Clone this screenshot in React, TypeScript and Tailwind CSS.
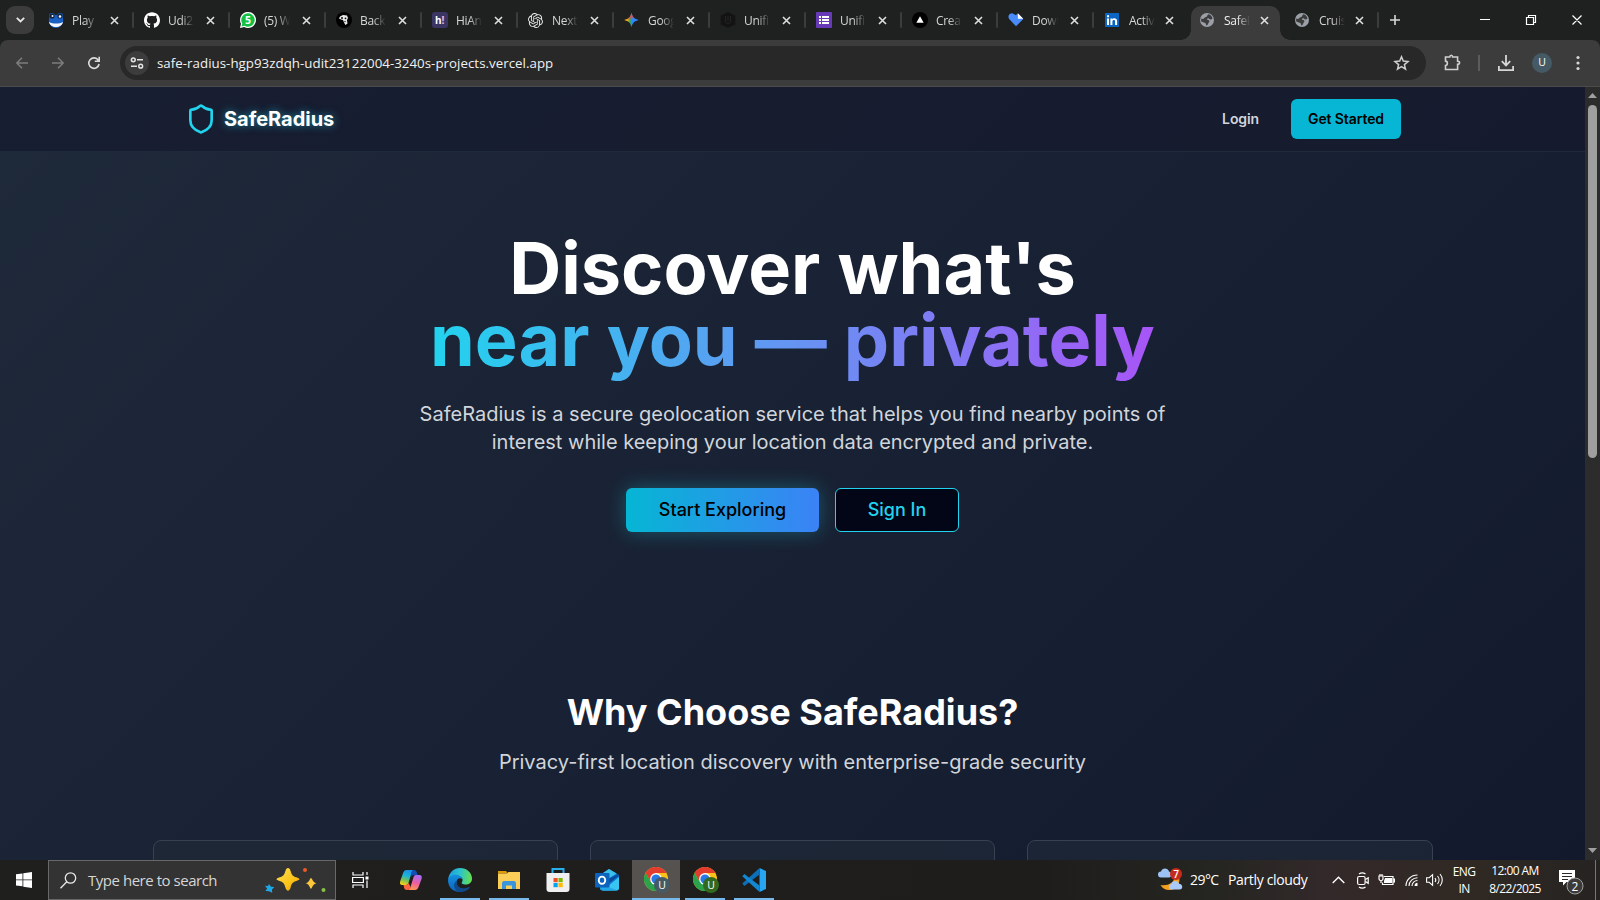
import { ReactNode } from 'react';
import { Shield } from 'lucide-react';
import { SiGithub, SiOpenai } from 'react-icons/si';

function Globe() {
  return (
    <svg width="16" height="16" viewBox="0 0 16 16">
      <circle cx="7" cy="8" r="7" fill="#9aa0a6" />
      <path d="M8.300 2.300c2.400.3 3.900 2.200 4.100 4.400-1 1-2.400 1-3.300.1-.9-.8-2-.5-2.100.4-.1.800 2.200.4 2.400 1.900.1 1-.6 1.300-1 2-.3.700-.7 2.300-1.700 2.300-.8 0-.5-1.700-1.200-2.200C4.700 10.600 3 10.400 1.300 9.600.9 8.500 1 7.500 1.300 6.600c1.300.5 2.500.4 3-.7.5-1 1.800-.5 2.600-1.400.5-.6.500-1.600 1.400-2.200z" fill="#3c3c3c" />
    </svg>
  );
}

function Frog() {
  return (
    <svg width="16" height="16" viewBox="0 0 16 16">
      <path d="M1 3c0-2.500 5-3 6 0h2c1-3 6-2.500 6 0v4c1 4-2 9-7 9s-8-5-7-9z" fill="#1a5fc4" />
      <circle cx="4" cy="4" r="2.600" fill="#10233f" /><circle cx="12" cy="4" r="2.600" fill="#10233f" />
      <circle cx="4.500" cy="4" r="1" fill="#fff" /><circle cx="12" cy="4.500" r="1.300" fill="#fff" />
      <path d="M1 10c4 2 10 2 14 0-.8 3.500-3.500 5-7 5s-6.200-1.500-7-5z" fill="#f3f6fb" />
    </svg>
  );
}

function WhatsApp() {
  return (
    <svg width="16" height="16" viewBox="0 0 16 16">
      <path d="M0 16l1-4.200A8 8 0 1 1 4.200 15z" fill="#fff" />
      <path d="M1.500 14.600l.8-3A6.700 6.700 0 1 1 4.600 13.800z" fill="#12c143" />
      <text x="8.100" y="12" textAnchor="middle" fontSize="10.500" fontWeight="700" fill="#fff" fontFamily="Open Sans, sans-serif">5</text>
    </svg>
  );
}

function Backpack() {
  return (
    <svg width="16" height="16" viewBox="0 0 16 16">
      <circle cx="8" cy="8" r="8" fill="#000" />
      <path d="M4 4.500l3-1.500 4 .5 1 2.500-1 2 .5 3.500-2 1.500-1.500-2.500-1-2.500-2-.5L3 6.500z" fill="#e8e8e8" />
      <circle cx="6" cy="6" r="1" fill="#111" /><circle cx="9.500" cy="6.300" r=".9" fill="#111" /><circle cx="9" cy="9.500" r=".7" fill="#222" />
    </svg>
  );
}

function HiAnime() {
  return (
    <svg width="16" height="16" viewBox="0 0 16 16">
      <rect width="16" height="16" rx="3" fill="#3b3564" />
      <text x="3" y="11.800" fontSize="10" fontWeight="700" fill="#fff" fontFamily="Open Sans, sans-serif">h<tspan fill="#ffb6dc">!</tspan></text>
    </svg>
  );
}

function Gemini() {
  return (
    <svg width="16" height="16" viewBox="0 0 16 16">
      <defs>
        <linearGradient id="gm" x1="0" y1=".5" x2="1" y2=".5"><stop offset="0" stopColor="#fbbc04" /><stop offset=".22" stopColor="#fbbc04" /><stop offset=".4" stopColor="#34a853" /><stop offset=".55" stopColor="#3186ff" /><stop offset="1" stopColor="#3186ff" /></linearGradient>
        <linearGradient id="gr" x1=".4" y1="0" x2=".55" y2=".5"><stop offset="0" stopColor="#f94543" /><stop offset=".55" stopColor="#f94543" stopOpacity=".8" /><stop offset=".9" stopColor="#f94543" stopOpacity="0" /></linearGradient>
      </defs>
      <path d="M7.500.8C8.400 5 10.500 7.100 14.800 8 10.500 8.900 8.400 11 7.500 15.200 6.600 11 4.500 8.900.2 8 4.500 7.100 6.600 5 7.500.8z" fill="url(#gm)" />
      <path d="M7.500.8C8.400 5 10.500 7.100 14.800 8 10.500 8.900 8.400 11 7.500 15.200 6.600 11 4.500 8.900.2 8 4.500 7.100 6.600 5 7.500.8z" fill="url(#gr)" />
    </svg>
  );
}

function Unified() {
  return (
    <svg width="16" height="16" viewBox="0 0 16 16">
      <path d="M8 0l7.200 3.500v9L8 16 .8 12.500v-9z" fill="#131313" />
      <path d="M5.500 4v6l2.500 2 2.500-2V4M8 4v5" stroke="#242424" fill="none" />
    </svg>
  );
}

function Forms() {
  return (
    <svg width="16" height="16" viewBox="0 0 16 16">
      <rect width="16" height="16" rx="1" fill="#673ab7" />
      <path d="M3 4h2v2H3zM6 4h7v2H6zM3 7h2v2H3zM6 7h7v2H6zM3 10h2v2H3zM6 10h7v2H6z" fill="#fff" />
    </svg>
  );
}

function Vercel() {
  return (
    <svg width="16" height="16" viewBox="0 0 16 16">
      <circle cx="8" cy="8" r="8" fill="#000" />
      <path d="M8 4.300l3.700 6.400H4.300z" fill="#fff" />
    </svg>
  );
}

function Heart() {
  return (
    <svg width="17" height="16" viewBox="0 0 17 16">
      <path d="M8.500 14.600L1.200 7C-1 3.500 2 .5 5 1l3.500 2L10 1l6.300 6z" fill="#4a8bfb" />
      <path d="M10.500.8l5.800 5.800h-5.800z" fill="#fff" />
    </svg>
  );
}

function LinkedIn() {
  return (
    <svg width="14" height="14" viewBox="0 0 14 14">
      <rect width="14" height="14" rx=".5" fill="#0a66c2" />
      <path d="M2 5.400h2V12H2zM2 2.200h2v2H2zM5.400 5.400h1.900v.9c1-1.700 4.800-1.500 4.800 1.700v4h-2V8.600c0-2.100-2.700-1.900-2.700 0V12h-2z" fill="#fff" />
    </svg>
  );
}

function Cross() {
  return (
    <svg width="9" height="9" viewBox="0 0 9 9" className="shrink-0">
      <path d="M1 1l7 7M8 1l-7 7" stroke="#dfdfdf" strokeWidth="1.600" fill="none" />
    </svg>
  );
}

const tabs: { name: string; icon: ReactNode }[] = [
  { name: 'Play ', icon: <Frog /> },
  { name: 'Udi2', icon: <SiGithub size={16} color="#fff" /> },
  { name: '(5) W', icon: <WhatsApp /> },
  { name: 'Back', icon: <Backpack /> },
  { name: 'HiAni', icon: <HiAnime /> },
  { name: 'Next.', icon: <SiOpenai size={15} color="#e8e8e8" /> },
  { name: 'Goog', icon: <Gemini /> },
  { name: 'Unifie', icon: <Unified /> },
  { name: 'Unifie', icon: <Forms /> },
  { name: 'Creat', icon: <Vercel /> },
  { name: 'Down', icon: <Heart /> },
];

function TabBody({ name, icon, bright }: { name: string; icon: ReactNode; bright?: boolean }) {
  return (
    <>
      <div className="flex w-4 shrink-0 items-center">{icon}</div>
      <div
        className={
          'ml-2 w-[26px] shrink-0 overflow-hidden whitespace-nowrap pt-[2px] text-[12px] leading-4 tracking-[-0.3px] [mask-image:linear-gradient(to_right,black_50%,transparent)] ' +
          (bright ? 'text-[#f0f0f0]' : 'text-[#d6d6d6]')
        }
      >
        {name}
      </div>
    </>
  );
}

function TabStrip() {
  return (
    <div className="flex h-10 shrink-0 items-center bg-[#1f2020] pl-[6px]">
      <div className="flex h-7 w-7 items-center justify-center rounded-[9px] bg-[#3c3c3c]">
        <svg width="9" height="6" viewBox="0 0 9 6"><path d="M.8.8l3.700 3.700L8.200.8" stroke="#e6e6e6" strokeWidth="1.800" fill="none" /></svg>
      </div>
      <div className="flex pl-[2px]">
        {tabs.map((t, i) => (
          <div key={i} className="flex h-10 w-24 items-center pl-3">
            <TabBody {...t} />
            <div className="ml-3 flex w-[9px] shrink-0"><Cross /></div>
            <div className="ml-[13px] h-4 w-[2px] shrink-0 rounded bg-[#3c3c3c]" />
          </div>
        ))}
      </div>
      <div className="flex h-10 w-[99px] items-center pl-[13px]">
        <TabBody name="Activ" icon={<LinkedIn />} />
        <div className="ml-[10px]"><Cross /></div>
      </div>
      <div className="relative flex h-[34px] w-[89px] items-center self-end rounded-t-[10px] bg-[#3c3c3c] pl-[9px]">
        <div className="absolute bottom-0 left-[-10px] h-[10px] w-[10px] bg-[radial-gradient(circle_at_0_0,transparent_9.500px,#3c3c3c_10px)]" />
        <div className="absolute bottom-0 right-[-10px] h-[10px] w-[10px] bg-[radial-gradient(circle_at_100%_0,transparent_9.500px,#3c3c3c_10px)]" />
        <div className="mb-[6px] flex items-center">
          <TabBody name="SafeR" icon={<Globe />} bright />
          <div className="ml-[10px]"><Cross /></div>
        </div>
      </div>
      <div className="flex h-10 w-[97px] items-center pl-[15px]">
        <TabBody name="Cruise" icon={<Globe />} />
        <div className="ml-[10px]"><Cross /></div>
      </div>
      <div className="h-4 w-[2px] rounded bg-[#3c3c3c]" />
      <svg width="12" height="12" viewBox="0 0 12 12" className="ml-[10px]"><path d="M6 1v10M1 6h10" stroke="#d8d8d8" strokeWidth="1.600" /></svg>
      <svg width="102" height="12" viewBox="0 0 102 12" className="ml-[79px]" fill="none" stroke="#fff">
        <path d="M0 5.500h10M46.500 3.500h7v7h-7zM48.500 3.500v-2h7v7h-2M92.500 1.500l9 9M101.500 1.500l-9 9" strokeWidth="1.200" />
      </svg>
    </div>
  );
}

function Toolbar() {
  return (
    <div className="flex h-[47px] shrink-0 bg-[#1f2020]">
      <div className="flex w-full items-center rounded-t-[8px] border-b border-[#4b4b4b] bg-[#3c3c3c] pl-4">
        <svg width="12" height="12" viewBox="0 0 12 12" fill="none" stroke="#7c7c7c" strokeWidth="1.500"><path d="M12 6H1M6 .8L.9 6 6 11.200" /></svg>
        <svg width="12" height="12" viewBox="0 0 12 12" fill="none" stroke="#7c7c7c" strokeWidth="1.500" className="ml-6"><path d="M0 6h11M6 .8L11.100 6 6 11.200" /></svg>
        <svg width="14" height="14" viewBox="0 0 14 14" fill="none" stroke="#dcdcdc" strokeWidth="1.600" className="ml-[23px]"><path d="M11.300 4.200A5.200 5.200 0 1 0 12.100 8M12.200.8v4.400H7.800" /></svg>
        <div className="ml-[19px] flex h-[34px] w-[1306px] items-center rounded-full bg-[#282828] pl-[5px] pr-4">
          <div className="flex h-6 w-6 items-center justify-center rounded-full bg-[#3c3c3c]">
            <svg width="14" height="12" viewBox="0 0 14 12" fill="none" stroke="#e3e3e3" strokeWidth="1.500"><circle cx="3.300" cy="2.800" r="1.900" /><path d="M7 2.800h6M1 9.200h6" /><circle cx="10.700" cy="9.200" r="1.900" /></svg>
          </div>
          <div className="ml-2 pt-px text-[13.300px] tracking-[0.030px] text-[#f1f1f1]">safe-radius-hgp93zdqh-udit23122004-3240s-projects.vercel.app</div>
          <svg width="17" height="16" viewBox="0 0 17 16" fill="none" stroke="#cfcfcf" strokeWidth="1.500" className="ml-auto"><path d="M8.500 1.800l1.800 4.300 4.700.4-3.600 3.100 1.100 4.600-4-2.500-4 2.500 1.100-4.600L2 6.500l4.700-.4z" /></svg>
        </div>
        <svg width="17" height="17" viewBox="0 0 17 17" fill="none" stroke="#cfcfcf" strokeWidth="1.600" className="-mt-px ml-[18px]"><path d="M1.500 3h4.300c0-2.300 2.800-2.300 2.800 0h5v4.200c2.600 0 2.600 3 0 3V15.500H1.500v-4c2.500-.2 2.500-4.200 0-4.400z" /></svg>
        <div className="ml-[17px] h-4 w-[2px] bg-[#5c5c5c]" />
        <svg width="16" height="16" viewBox="0 0 16 16" fill="none" stroke="#d6d6d6" strokeWidth="1.800" className="ml-[18px]"><path d="M8 0v10M3.800 6.200L8 10.400l4.200-4.200M.9 11v4.100h14.200V11" /></svg>
        <div className="ml-[18px] flex h-5 w-5 items-center justify-center rounded-full bg-[#455a64] text-[10.500px] font-medium text-white">U</div>
        <svg width="4" height="16" viewBox="0 0 4 16" fill="#d6d6d6" className="ml-[24px]"><circle cx="2" cy="2.500" r="1.600" /><circle cx="2" cy="8" r="1.600" /><circle cx="2" cy="13.500" r="1.600" /></svg>
      </div>
    </div>
  );
}

function Page() {
  return (
    <div className="flex min-h-0 flex-1 overflow-hidden">
      <div className="flex h-full w-[1585px] flex-col overflow-hidden bg-[linear-gradient(135deg,#1e293a_0%,#182133_55%,#12192d_100%)] font-[Inter,sans-serif]">
        <header className="flex h-[65px] shrink-0 justify-between border-b border-[#1e293b] bg-[#15182c]/65 pl-[185px] pr-[184px]">
          <div className="flex items-center gap-[7px]">
            <Shield size={32} color="#22d3ee" strokeWidth={2} />
            <span className="text-[20px] font-bold tracking-[-0.020px] text-white [text-shadow:0_0_8px_rgba(34,211,238,0.6)]">SafeRadius</span>
          </div>
          <div className="flex items-center gap-8">
            <span className="pb-px text-[14px] font-semibold tracking-[-0.1px] text-[#d1d5db]">Login</span>
            <button className="h-10 w-[110px] rounded-md bg-[#06b6d4] pb-px text-[14px] font-semibold tracking-[-0.1px] text-black">Get Started</button>
          </div>
        </header>
        <section className="flex flex-col items-center pt-[80px] text-center">
          <h1 className="text-[72px] font-bold leading-[72px] text-white">
            <span className="block">Discover what's</span>
            <span className="-mb-3 block bg-[linear-gradient(to_right,#22d3ee,#a855f7)] bg-clip-text pb-3 text-transparent">near you — privately</span>
          </h1>
          <p className="mt-6 w-[768px] text-[20px] leading-7 text-[#d1d5db]">
            SafeRadius is a secure geolocation service that helps you find nearby points of interest while keeping your location data encrypted and private.
          </p>
          <div className="mt-8 flex gap-4">
            <button className="h-11 w-[193px] rounded-md bg-[linear-gradient(to_right,#06b6d4,#3b82f6)] pb-px text-[18px] font-[550] text-black shadow-[0_0_20px_rgba(34,211,238,0.3)]">Start Exploring</button>
            <button className="h-11 w-[124px] rounded-md border border-[#22d3ee] bg-[#020617] pb-px text-[18px] font-[550] text-[#22d3ee]">Sign In</button>
          </div>
        </section>
        <section className="flex flex-col items-center pt-[160px] text-center">
          <h2 className="text-[36px] font-bold leading-10 text-white">Why Choose SafeRadius?</h2>
          <p className="mt-4 text-[20px] leading-7 text-[#d1d5db]">Privacy-first location discovery with enterprise-grade security</p>
          <div className="mt-16 grid w-[1280px] grid-cols-3 gap-8">
            <div className="h-40 rounded-lg border border-[#374151] bg-[#1f2937]/70" />
            <div className="h-40 rounded-lg border border-[#374151] bg-[#1f2937]/70" />
            <div className="h-40 rounded-lg border border-[#374151] bg-[#1f2937]/70" />
          </div>
        </section>
      </div>
      <div className="flex w-[15px] flex-col items-center bg-[#2c2c2c] pb-[7px] pt-[6px]">
        <svg width="9" height="5" viewBox="0 0 9 5" fill="#a0a0a0"><path d="M4.500 0L9 5H0z" /></svg>
        <div className="mt-[7px] h-[353px] w-[9px] rounded-full bg-[#9f9f9f]" />
        <svg width="9" height="5" viewBox="0 0 9 5" fill="#a0a0a0" className="mt-auto"><path d="M4.500 5L9 0H0z" /></svg>
      </div>
    </div>
  );
}

function Copilot() {
  return (
    <svg width="24" height="22" viewBox="0 0 24 22">
      <defs>
        <linearGradient id="ca" x1=".6" y1="0" x2=".3" y2="1"><stop offset="0" stopColor="#1b8ee8" /><stop offset=".4" stopColor="#1bb5d8" /><stop offset=".7" stopColor="#7cc152" /><stop offset="1" stopColor="#f5cf1c" /></linearGradient>
        <linearGradient id="cb" x1=".6" y1="0" x2=".3" y2="1"><stop offset="0" stopColor="#a86cf5" /><stop offset=".5" stopColor="#ee5fa0" /><stop offset="1" stopColor="#fd9a4e" /></linearGradient>
      </defs>
      <path d="M15 1H7.500C5.500 1 4.600 2.500 4 4.300L1.300 12C.4 15 1.500 16 3.500 16H7c1.500 0 2-.8 2.500-2.200L12.500 4c.5-1.700 1.200-2.700 2.500-3z" fill="url(#ca)" />
      <path d="M15 1c1.700 0 2.400 1 2.900 2.700L18.600 6H15c-1.600 0-2.300 1-2.800 2.300L12.500 4c.5-1.700 1.200-3 2.500-3z" fill="#134fb8" />
      <path d="M8 21h8c2 0 3-1.500 3.600-3.300L22.500 10c.9-3-.3-4-2.300-4H17c-1.500 0-2 .8-2.500 2.200L11.500 18C11 19.700 9.500 21 8 21z" fill="url(#cb)" />
      <path d="M8 21c-2 0-2.600-1-3-2.700L4.500 16H7c1.500 0 2-.8 2.500-2.200l2 4.200C11 19.700 10 21 8 21z" fill="#ff6340" />
    </svg>
  );
}

function Edge() {
  return (
    <svg width="24" height="24" viewBox="0 0 24 24">
      <defs>
        <linearGradient id="ea" x1="0" y1=".4" x2="1" y2=".5"><stop offset="0" stopColor="#1b9de2" /><stop offset=".5" stopColor="#2ec4c9" /><stop offset="1" stopColor="#66e04b" /></linearGradient>
        <linearGradient id="eb" x1="0" y1="0" x2="0" y2="1"><stop offset="0" stopColor="#1590df" /><stop offset="1" stopColor="#0c62bd" /></linearGradient>
      </defs>
      <path d="M0 12C1 4 6 0 12 0c7 0 12 5 12 10.500 0 4-3 6-6.500 6-3 0-4.500-1.200-3.600-2.300 1.300-1.600 1.300-6.200-4.900-6.200C4.500 8 1 10 0 12z" fill="url(#ea)" />
      <path d="M0 12c1-3.500 4.500-5.500 8.500-5.200 3.200.2 5.500 2.200 5.800 4.700C12.500 9.500 9.500 10 8.700 13c-1 5 4.300 9.500 10.800 7.200C14.500 26.500 0 25 0 12z" fill="url(#eb)" />
      <path d="M8.700 13c-1 5 4.300 9.500 11 6.500 2-1 2.600-.4 1.500.8-3.500 4-9.200 4.600-12.200 2.900C5 20.500 5.500 14 8.700 13z" fill="#114a8b" />
    </svg>
  );
}

function Folder() {
  return (
    <svg width="22" height="19" viewBox="0 0 22 19">
      <path d="M0 0h8l2 2.500h-10z" fill="#dd9b05" /><path d="M0 2.500L9 2.500 10.500 1H22v17H0z" fill="#fbcf57" />
      <path d="M4 18v-5.500c0-1.500.8-2.500 2-2.500h10c1.200 0 2 1 2 2.500V18h-4v-3.500H8V18z" fill="#3b95dc" />
    </svg>
  );
}

function Store() {
  return (
    <svg width="24" height="24" viewBox="0 0 24 24">
      <path d="M6.500 6V1h11v5" stroke="#28b0ec" strokeWidth="2" fill="none" />
      <path d="M.5 5h23v16c0 1.800-1 3-3 3h-17c-2 0-3-1.200-3-3z" fill="#f0f0f0" />
      <path d="M7.500 10h4.200v4.200H7.500z" fill="#f25022" /><path d="M12.500 10h4.200v4.200h-4.200z" fill="#7fba00" /><path d="M7.500 15h4.200v4.200H7.500z" fill="#00a4ef" /><path d="M12.500 15h4.200v4.200h-4.200z" fill="#ffb900" />
    </svg>
  );
}

function Outlook() {
  return (
    <svg width="24" height="24" viewBox="0 0 24 24">
      <path d="M14 1l10 6v13c0 1.500-1 2.500-2.500 2.500h-14C6 22.500 5 21.500 5 20V7z" fill="#0e72cc" />
      <path d="M14 1l7.500 4.500-11 7L5 7z" fill="#3ac0ec" /><path d="M10 13l13-7 1 1.500L13 16z" fill="#0a4a9c" />
      <path d="M24 9v11c0 1.500-1 2.500-2.500 2.500h-14z" fill="#38c5f1" /><path d="M5 16l17 6.300-14.500.2C6 22.500 5 21.500 5 20z" fill="#21a7e5" />
      <rect y="5" width="14.500" height="14.500" rx="1" fill="#0b63bd" />
      <ellipse cx="7" cy="12.200" rx="3.200" ry="3.600" fill="none" stroke="#fff" strokeWidth="1.900" />
    </svg>
  );
}

function Chrome({ badge }: { badge: string }) {
  return (
    <svg width="26" height="27" viewBox="0 0 26 27">
      <circle cx="12" cy="12" r="12" fill="#fbc116" />
      <path d="M1.600 6A12 12 0 0 1 22.400 6H12L6.800 15z" fill="#e33b2e" />
      <path d="M1.600 6A12 12 0 0 0 12 24l5.200-9L12 12 6.800 15z" fill="#2ba24c" />
      <circle cx="12" cy="12" r="5.900" fill="#fff" /><circle cx="12" cy="12" r="4.600" fill="#2878e8" />
      <circle cx="18" cy="18" r="8" fill={badge} />
      <text x="18" y="21.800" textAnchor="middle" fontSize="10.500" fill="#fff" fontFamily="Open Sans, sans-serif">U</text>
    </svg>
  );
}

function VsCode() {
  return (
    <svg width="24" height="24" viewBox="0 0 24 24">
      <path d="M17.500 0L24 3v18l-6.500 3z" fill="#27a5f1" />
      <path d="M.3 15.500L17.500 0v6.500L2.300 18z" fill="#0d6fb8" /><path d="M.3 8.300L2.300 6l15.200 11.500V24z" fill="#1288d3" />
    </svg>
  );
}

function AppSlot({ icon, open, active, shift }: { icon: ReactNode; open?: boolean; active?: boolean; shift?: string }) {
  return (
    <div className={'flex w-12 shrink-0 flex-col items-center ' + (active ? 'bg-[#555250]' : '')}>
      <div className={'flex h-[38px] items-center justify-center pt-[2px] ' + (shift ?? '')}>{icon}</div>
      {open && <div className={'h-[2px] bg-[#76b9ed] ' + (active ? 'w-12' : 'w-10')} />}
    </div>
  );
}

function Taskbar() {
  return (
    <div className="flex h-10 shrink-0 bg-[linear-gradient(to_right,#1f1f1e_0%,#1e1d1c_65%,#252521_76%,#33292a_83%,#302923_92%,#252322_100%)] text-white">
      <div className="flex w-12 items-center justify-center">
        <svg width="16" height="16" viewBox="0 0 16 16" fill="#fff"><path d="M0 2.300l6.500-.9v6H0zM7.300 1.300L16 0v7.400H7.300zM0 8.300h6.500v6L0 13.500zM7.300 8.300H16V16l-8.700-1.300z" /></svg>
      </div>
      <div className="flex h-10 w-[288px] items-center border border-[#686868] bg-[#333] pl-[11px] pr-2">
        <svg width="17" height="17" viewBox="0 0 17 17" fill="none" stroke="#e8e8e8" strokeWidth="1.300"><circle cx="10.500" cy="6" r="5.200" /><path d="M6.800 9.700L.5 16.300" /></svg>
        <div className="ml-[11px] whitespace-nowrap text-[15px] tracking-[-0.470px] text-[#d6d6d6]">Type here to search</div>
        <svg width="64" height="26" viewBox="0 0 64 26" className="ml-auto">
          <defs><linearGradient id="st" x1="0" y1="0" x2="1" y2="1"><stop offset="0" stopColor="#ffdf55" /><stop offset=".6" stopColor="#fcc419" /><stop offset="1" stopColor="#e89a08" /></linearGradient></defs>
          <path d="M25 1c1.300 0 2 1 2.600 3 1.200 4.300 2.400 5.300 5.600 6.300 4.300 1.200 4.300 2.600 0 3.800-3.200 1-4.400 2.300-5.600 6.400-1.200 4.200-4 4.200-5.200 0-1.200-4.100-2.400-5.400-5.600-6.400-4.300-1.200-4.300-2.600 0-3.800 3.200-1 4.400-2 5.600-6.300.6-2 1.300-3 2.600-3z" fill="url(#st)" />
          <path d="M48 11c1.300 0 1.200 4 5.500 5.300-4.500 1.200-4.300 5.500-5.500 5.500s-1-4.300-5.300-5.500C47 15 46.700 11 48 11z" fill="#fcc93a" />
          <path d="M6 17l2 2.700 3.300.3-2.300 2.400.2 3.400L6 24.200 2.500 24l1.600-2.500L2 18.800l3 .1z" fill="#1ea7e8" />
          <circle cx="42" cy="3" r="2" fill="#ee5a24" /><circle cx="60.500" cy="23" r="2" fill="#83c341" />
        </svg>
      </div>
      <div className="flex w-12 items-center justify-center">
        <svg width="17" height="16" viewBox="0 0 17 16" fill="none" stroke="#fff" strokeWidth="1.200"><path d="M1 0v3h10V0M1 16v-3h10v3M.6 5.500h10.800v5H.6zM15 0v3M15 8.500V16" /><path d="M13.500 4.500h3v3h-3z" fill="#fff" stroke="none" /></svg>
      </div>
      <div className="flex pl-[3px]">
        <AppSlot icon={<Copilot />} />
        <div className="w-px" />
        <AppSlot icon={<Edge />} open />
        <div className="w-px" />
        <AppSlot icon={<Folder />} open />
        <div className="w-px" />
        <AppSlot icon={<Store />} />
        <div className="w-px" />
        <AppSlot icon={<Outlook />} />
        <div className="w-px" />
        <AppSlot icon={<Chrome badge="#455a64" />} open active shift="pl-px" />
        <div className="w-px" />
        <AppSlot icon={<Chrome badge="#33691e" />} open shift="pl-px" />
        <div className="w-px" />
        <AppSlot icon={<VsCode />} open />
      </div>
      <div className="ml-auto flex items-center">
        <svg width="26" height="24" viewBox="0 0 26 24">
          <path d="M3 9.500a3 3 0 0 1 0-6C4-.5 10-.5 11 3.500c3 .5 3 6 0 6z" fill="#9dc3f7" />
          <path d="M21 8c2 8-3 15-11 14-3-.5-6-2-7.500-5C10 18 16 15 16.500 9z" fill="#f6a11c" />
          <path d="M13 21.500a2.800 2.800 0 0 1 .3-5.500c1-4 6.700-4 7.700-.3 4 0 4.500 5.800.5 5.800z" fill="#a9c9f8" />
          <circle cx="18" cy="6" r="6" fill="#c42b1c" />
          <text x="18" y="9.600" textAnchor="middle" fontSize="10" fontWeight="600" fill="#fff" fontFamily="Open Sans, sans-serif">7</text>
        </svg>
        <div className="ml-[6px] w-[38px] whitespace-nowrap pb-px text-[14px] tracking-[-0.550px]">29°C</div>
        <div className="w-[79px] whitespace-nowrap pb-px text-[14px] tracking-[-0.350px]">Partly cloudy</div>
        <svg width="13" height="8" viewBox="0 0 13 8" fill="none" stroke="#fff" strokeWidth="1.400" className="ml-[25px]"><path d="M.7 7l5.800-5.800L12.300 7" /></svg>
        <svg width="12" height="17" viewBox="0 0 12 17" fill="none" stroke="#fff" strokeWidth="1.200" className="ml-[12px]"><rect x=".6" y="4.500" width="7.500" height="8" rx="1.500" /><path d="M8.500 7.500l2.700-1.700v5.500L8.500 9.500M2 2c2-1.500 4.500-1.500 6.500 0M2 15c2 1.500 4.500 1.500 6.500 0" /></svg>
        <svg width="17" height="12" viewBox="0 0 17 12" fill="none" stroke="#fff" strokeWidth="1.200" className="ml-[9px]"><path d="M6 2.500h9v8H4.500V8.500M15 5h1.400v3H15M1 2v2.500c0 3 4 3 4 0V2zM2 2V0M4 2V0M3 6.500V9" /><path d="M7 4h7v5H6V7z" fill="#fff" stroke="none" /></svg>
        <svg width="14" height="14" viewBox="0 0 14 14" fill="none" stroke="#fff" strokeWidth="1.100" className="ml-[10px]"><path d="M1 13C1 7 6 2 12.500 2M4 13c0-4.500 4-8.300 8.500-8.300M7 13c0-3 2.500-5.500 5.500-5.500" /><path d="M9.500 13c0-2 1.500-3.200 3-3.200V13z" fill="#fff" stroke="none" /></svg>
        <svg width="17" height="14" viewBox="0 0 17 14" fill="none" stroke="#fff" strokeWidth="1.100" className="ml-[7px]"><path d="M.6 4.700h2.600l3.400-3v10.600l-3.400-3H.6zM9 5c1 1.200 1 2.800 0 4M11.500 3c2 2.300 2 5.700 0 8M14 1c3 3.500 3 8.500 0 12" /></svg>
        <div className="ml-[7px] w-[28px] text-center text-[12px] leading-[17px] tracking-[-0.6px]">ENG<br />IN</div>
        <div className="ml-[8px] w-[58px] whitespace-nowrap text-center text-[12px] leading-[18px] tracking-[-0.6px]">12:00 AM<br />8/22/2025</div>
        <svg width="26" height="26" viewBox="0 0 26 26" className="ml-[14px] mt-[6px]">
          <path d="M1 0h16v12H8.500L5 15.500V12H1z" fill="#fff" /><path d="M4 3.500h10M4 6.500h10M4 9.500h6" stroke="#302923" />
          <circle cx="17" cy="16" r="8" fill="#3c3a39" stroke="#a0a0a0" />
          <text x="17" y="20.500" textAnchor="middle" fontSize="12" fill="#fff" fontFamily="Open Sans, sans-serif">2</text>
        </svg>
        <div className="ml-[11px] mr-1 h-10 w-px bg-[#777]" />
      </div>
    </div>
  );
}

export default function App() {
  return (
    <div className="flex h-[900px] w-[1600px] flex-col overflow-hidden bg-black font-['Open_Sans','Noto_Sans',sans-serif]">
      <TabStrip />
      <Toolbar />
      <Page />
      <Taskbar />
    </div>
  );
}
